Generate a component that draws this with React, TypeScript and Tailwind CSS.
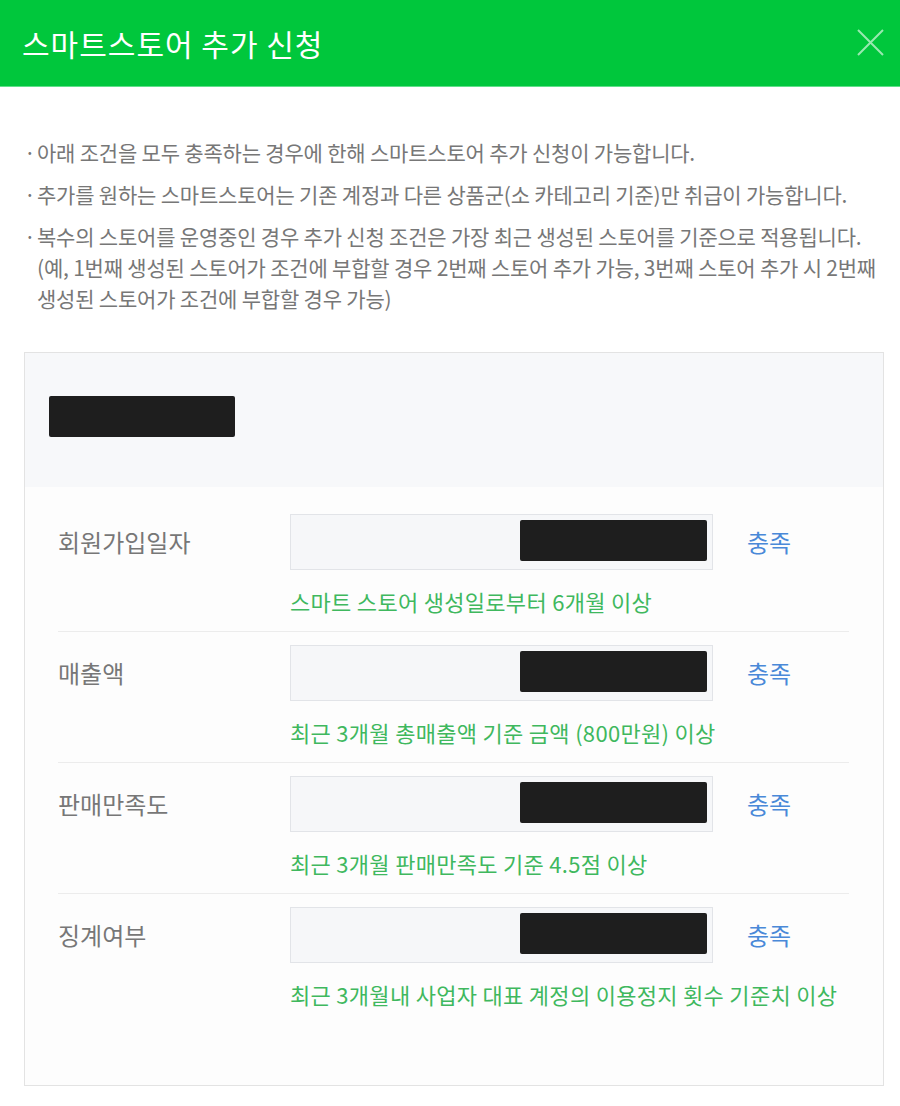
const notes = [
  ["아래 조건을 모두 충족하는 경우에 한해 스마트스토어 추가 신청이 가능합니다."],
  ["추가를 원하는 스마트스토어는 기존 계정과 다른 상품군(소 카테고리 기준)만 취급이 가능합니다."],
  [
    "복수의 스토어를 운영중인 경우 추가 신청 조건은 가장 최근 생성된 스토어를 기준으로 적용됩니다.",
    "(예, 1번째 생성된 스토어가 조건에 부합할 경우 2번째 스토어 추가 가능, 3번째 스토어 추가 시 2번째",
    "생성된 스토어가 조건에 부합할 경우 가능)",
  ],
];

const conditions = [
  { label: "회원가입일자", hint: "스마트 스토어 생성일로부터 6개월 이상" },
  { label: "매출액", hint: "최근 3개월 총매출액 기준 금액 (800만원) 이상" },
  { label: "판매만족도", hint: "최근 3개월 판매만족도 기준 4.5점 이상" },
  { label: "징계여부", hint: "최근 3개월내 사업자 대표 계정의 이용정지 횟수 기준치 이상" },
];

function ConditionRow({ label, hint, last }: { label: string; hint: string; last: boolean }) {
  return (
    <div className={last ? "pt-[13px]" : "pt-[13px] pb-[17px] border-b border-[#ececec]"}>
      <div className="flex items-center">
        <div className="w-[232px] text-[24px] text-[#777]">{label}</div>
        <div className="flex h-[56px] w-[423px] justify-end border border-[#e2e4e8] bg-[#f6f7f9] p-[5px]">
          <div className="h-[41px] w-[187px] rounded-[2px] bg-[#1e1e1e]" />
        </div>
        <div className="ml-[34px] text-[24px] text-[#4a89d8]">충족</div>
      </div>
      <div className="mt-[18px] whitespace-nowrap pl-[232px] text-[22px] leading-[26px] text-[#3fb85e] tracking-[0.3px]">
        {hint}
      </div>
    </div>
  );
}

export default function App() {
  return (
    <div
      className="min-h-[1106px] w-[900px] bg-white"
      style={{ fontFamily: '"Noto Sans CJK KR", "Noto Sans", sans-serif' }}
    >
      <header className="flex h-[87px] items-center justify-between border-b border-[#5fe08a] bg-[#00c73c] pl-[22px] pr-[16px]">
        <h1 className="text-[30px] font-normal text-white tracking-[1px]">스마트스토어 추가 신청</h1>
        <svg width="27" height="27" viewBox="0 0 27 27" className="mt-[-1px]" fill="none">
          <path d="M1 1L26 26M26 1L1 26" stroke="rgba(255,255,255,0.6)" strokeWidth="2" />
        </svg>
      </header>

      <ul className="mt-[50px] space-y-[11px] pl-[24px] text-[21px] leading-[31px] text-[#777] tracking-[-0.2px]">
        {notes.map((lines, i) => (
          <li key={i} className="flex whitespace-nowrap">
            <span className="w-[13px] shrink-0">·</span>
            <span>
              {lines.map((l, j) => (
                <span key={j} className="block">
                  {l}
                </span>
              ))}
            </span>
          </li>
        ))}
      </ul>

      <section className="ml-[24px] mr-[16px] mt-[38px] border border-[#e3e3e3] bg-[#fdfdfd] pb-[78px]">
        <div className="h-[134px] bg-[#f7f8fa] pl-[24px] pt-[43px]">
          <div className="h-[41px] w-[186px] rounded-[2px] bg-[#1e1e1e]" />
        </div>
        <div className="mt-[14px] pl-[33px] pr-[34px]">
          {conditions.map((c, i) => (
            <ConditionRow key={c.label} label={c.label} hint={c.hint} last={i === conditions.length - 1} />
          ))}
        </div>
      </section>
    </div>
  );
}
